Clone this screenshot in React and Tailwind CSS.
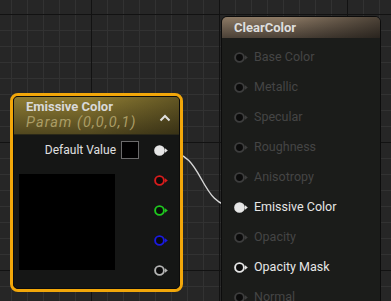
import React from 'react';

const Pin = ({ color = '#e6e6e6', filled = false, dim = false }) => {
  const stroke = dim ? '#3d3d3d' : color;
  return (
    <svg width="15" height="11" viewBox="0 0 15 11" className="block shrink-0">
      <circle cx="5.5" cy="5.5" r="4.4" fill={filled ? stroke : '#0b0b0b'} stroke={stroke} strokeWidth="1.9" />
      <path d="M11 3.2 L13.8 5.5 L11 7.8 Z" fill={stroke} />
    </svg>
  );
};

const clearRows = [
  { label: 'Base Color', dim: true },
  { label: 'Metallic', dim: true },
  { label: 'Specular', dim: true },
  { label: 'Roughness', dim: true },
  { label: 'Anisotropy', dim: true },
  { label: 'Emissive Color', filled: true },
  { label: 'Opacity', dim: true },
  { label: 'Opacity Mask' },
  { label: 'Normal', dim: true },
];

const outPins = ['#e6e6e6', '#d81c1c', '#1fc81f', '#1a1ae0', '#b4b4b4'];

export default function App() {
  return (
    <div
      className="relative w-[391px] h-[301px] overflow-hidden bg-[#262626] font-['Roboto',sans-serif]
        bg-[linear-gradient(to_right,#121212_1px,transparent_1px),linear-gradient(to_bottom,#121212_1px,transparent_1px),linear-gradient(to_right,#323232_1px,transparent_1px),linear-gradient(to_bottom,#323232_1px,transparent_1px)]
        [background-size:128px_128px,128px_128px,16px_16px,16px_16px]
        [background-position:91px_14px,91px_14px,11px_14px,11px_14px]"
    >
      {/* wire */}
      <svg className="absolute inset-0" width="391" height="301">
        <path d="M168 152 C 205 152, 198 207, 236 207" fill="none" stroke="#d6d6d6" strokeWidth="1.4" />
      </svg>

      {/* Emissive Color param node */}
      <div className="absolute left-[10px] top-[93px] w-[173px] h-[199px] rounded-[8px] border-[3px] border-[#f2a70a] bg-[#151615]">
        <div className="h-full rounded-[5px] border border-[#0c0c0c] overflow-hidden flex flex-col">
          <div className="h-[38px] pl-[12px] pr-[8px] flex items-center justify-between border-b border-[#2a2818] bg-[linear-gradient(to_right,rgba(0,0,0,0)_45%,rgba(0,0,0,0.3)),linear-gradient(to_bottom,#8e7c33,#51471f)]">
            <div className="flex flex-col leading-none">
              <span className="text-[13px] font-bold text-[#d9d9d9]">Emissive Color</span>
              <span className="mt-[3px] text-[14.5px] italic tracking-[1.1px] text-[#ab9d66]">Param (0,0,0,1)</span>
            </div>
            <svg width="12" height="8" viewBox="0 0 12 8" className="mt-[4px]">
              <path d="M1.5 6.5 L6 2 L10.5 6.5" fill="none" stroke="#e0e0e0" strokeWidth="2" />
            </svg>
          </div>
          <div className="flex pl-[5px] pr-[10px]">
            <div className="flex-1 flex flex-col">
              <div className="h-[30px] flex items-center justify-end gap-[5px]">
                <span className="text-[12px] text-[#e0e0e0]">Default Value</span>
                <div className="w-[18px] h-[18px] bg-black border border-[#6a6a6a]" />
              </div>
              <div className="mt-[9px] w-[96px] h-[96px] bg-black" />
            </div>
            <div className="ml-[15px] flex flex-col">
              {outPins.map((c, i) => (
                <div key={i} className="h-[30px] flex items-center">
                  <Pin color={c} filled={i === 0} />
                </div>
              ))}
            </div>
          </div>
        </div>
      </div>

      {/* ClearColor result node */}
      <div className="absolute left-[221px] top-[16px] w-[160px] h-[300px] rounded-t-[6px] border border-[#0c0c0c] bg-[#1b1c1a] overflow-hidden">
        <div className="h-[21px] pl-[12px] flex items-center bg-[linear-gradient(to_right,rgba(0,0,0,0)_40%,rgba(0,0,0,0.45)),linear-gradient(to_bottom,#8d7a65,#4b4137)]">
          <span className="text-[13px] font-bold text-[#dedede]">ClearColor</span>
        </div>
        <div className="pt-[4px] flex flex-col">
          {clearRows.map((r) => (
            <div key={r.label} className="h-[30px] pl-[12px] flex items-center gap-[5px]">
              <Pin filled={r.filled} dim={r.dim} />
              <span className={`text-[12.5px] ${r.dim ? 'text-[#454545]' : 'text-[#e6e6e6]'}`}>{r.label}</span>
            </div>
          ))}
        </div>
      </div>
    </div>
  );
}
